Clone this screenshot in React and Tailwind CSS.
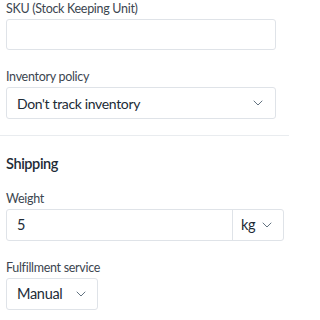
import { ChevronDown } from 'lucide-react';

// Product form fragment: SKU, inventory policy, shipping block

function Label({ children }) {
  return (
    <div className="text-[12.5px] leading-[18px] tracking-[-0.3px] text-[#3c4650] mb-[1px]">
      {children}
    </div>
  );
}

function Chevron({ className = '' }) {
  return <ChevronDown size={16} strokeWidth={1.5} className={'text-[#637381] ' + className} />;
}

export default function App() {
  return (
    <div className="w-[289px] h-[320px] bg-white overflow-hidden font-['Lato',sans-serif] text-[#212b36]">
      <div className="px-[6px]">
        <Label>SKU (Stock Keeping Unit)</Label>
        <div className="w-[270px] h-[31px] border border-[#dfe3e8] rounded-[3px] bg-white" />

        <div className="mt-[18px]">
          <Label>Inventory policy</Label>
          <div className="w-[270px] h-[32px] border border-[#dfe3e8] rounded-[3px] flex items-center justify-between pl-[10px] pr-[9px]">
            <span className="text-[14px] tracking-[-0.35px]">Don't track inventory</span>
            <Chevron />
          </div>
        </div>
      </div>

      <div className="mt-[16px] border-t border-[#e9ecef]" />

      <div className="px-[6px] pt-[18px]">
        <div className="text-[14.5px] leading-[20px] tracking-[-0.4px] font-semibold">Shipping</div>

        <div className="mt-[16px]">
          <Label>Weight</Label>
          <div className="w-[278px] h-[32px] border border-[#dfe3e8] rounded-[3px] flex">
            <div className="flex-1 flex items-center pl-[10px] text-[14.5px]">5</div>
            <div className="w-[51px] border-l border-[#dfe3e8] flex items-center justify-between pl-[8px] pr-[8px]">
              <span className="text-[14.5px] tracking-[-0.3px]">kg</span>
              <Chevron />
            </div>
          </div>
        </div>

        <div className="mt-[18px]">
          <Label>Fulfillment service</Label>
          <div className="w-[92px] h-[32px] border border-[#dfe3e8] rounded-[3px] flex items-center justify-between pl-[10px] pr-[8px]">
            <span className="text-[14.5px] tracking-[-0.3px]">Manual</span>
            <Chevron />
          </div>
        </div>
      </div>
    </div>
  );
}
